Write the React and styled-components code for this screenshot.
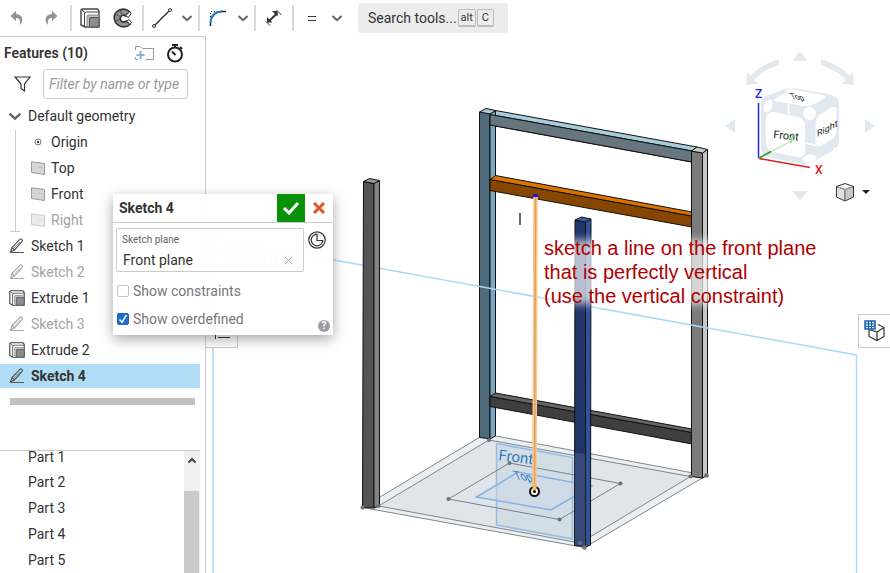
import React, { useState } from 'react';
import styled, { createGlobalStyle } from 'styled-components';

const GlobalStyle = createGlobalStyle`
  * { box-sizing: border-box; }
  body {
    margin: 0;
    background: #fff;
    color: #333;
    font: 14px/24px Roboto, "Liberation Sans", sans-serif;
    overflow: hidden;
  }
  button, input { font: inherit; color: inherit; }
  ul { list-style: none; margin: 0; padding: 0; }
  svg { display: block; }
`;

const Page = styled.div`
  position: relative;
  display: flex;
  flex-direction: column;
  height: 100vh;
`;

const Toolbar = styled.header`
  display: flex;
  flex: none;
  align-items: center;
  height: 36px;
`;

const ToolButton = styled.button`
  display: flex;
  flex: none;
  align-items: center;
  justify-content: center;
  width: ${(p) => p.$width || 32}px;
  height: 28px;
  padding: 0;
  border: 0;
  background: transparent;
`;

const Separator = styled.span`
  flex: none;
  width: 2px;
  height: 26px;
  margin: 0 2px;
  background: #dadada;
`;

const SearchButton = styled.button`
  display: flex;
  align-items: center;
  width: 150px;
  height: 30px;
  margin-left: 12px;
  padding: 0 10px;
  border: 0;
  border-radius: 3px;
  background: #ececec;
  white-space: nowrap;
`;

const Key = styled.kbd`
  height: 18px;
  min-width: 17px;
  margin-left: 1px;
  padding: 0 2px;
  border: 1px solid #bbb;
  border-bottom-width: 2px;
  border-radius: 2px;
  font: 11px/16px Roboto, sans-serif;
  text-align: center;
`;

const Workspace = styled.div`
  display: flex;
  flex: 1;
  min-height: 0;
`;

const Sidebar = styled.aside`
  display: flex;
  flex: none;
  flex-direction: column;
  width: 206px;
  border-top: 1px solid #ccc;
  border-right: 1px solid #ccc;
  padding-right: 5px;
`;

const PanelHeader = styled.div`
  display: flex;
  align-items: center;
  height: 32px;
  padding: 0 16px 0 4px;
`;

const PanelTitle = styled.h2`
  flex: 1;
  margin: 0;
  font-size: 14px;
  font-weight: 600;
`;

const IconButton = styled.button`
  display: flex;
  margin-left: 12px;
  padding: 0;
  border: 0;
  background: transparent;
`;

const FilterRow = styled.label`
  display: flex;
  align-items: center;
  gap: 12px;
  margin: 0 12px 5px 14px;
`;

const FilterInput = styled.input`
  flex: 1;
  min-width: 0;
  height: 30px;
  padding: 0 5px;
  border: 1px solid #ccc;
  border-radius: 3px;
  font-style: italic;
  &::placeholder { color: #999; opacity: 1; }
`;

const Tree = styled.ul`
  display: flex;
  flex-direction: column;
  gap: 2px;
`;

const Group = styled.ul`
  position: relative;
  display: flex;
  flex-direction: column;
  gap: 2px;
  margin-left: 15px;
  border-left: 1px solid #ccc;
  &::after {
    content: "";
    position: absolute;
    bottom: 0;
    left: -6px;
    width: 10px;
    height: 1px;
    background: #ccc;
  }
`;

const Row = styled.li`
  display: flex;
  align-items: center;
  gap: ${(p) => p.$gap || 6}px;
  height: 24px;
  padding-left: ${(p) => p.$indent || 9}px;
  background: ${(p) => (p.$active ? '#b0ddf5' : 'transparent')};
  color: ${(p) => (p.$muted ? '#a3a3a3' : '#333')};
  font-weight: ${(p) => (p.$active ? 700 : 400)};
  & > svg { flex: none; opacity: ${(p) => (p.$muted ? 0.5 : 1)}; }
`;

const RollbackBar = styled.div`
  flex: none;
  height: 7px;
  margin: 10px 5px 45px 10px;
  background: #c1c1c1;
`;

const Parts = styled.section`
  display: flex;
  flex: 1;
  min-height: 0;
  overflow: hidden;
  border-top: 1px solid #ccc;
`;

const PartList = styled.ul`
  flex: 1;
`;

const Part = styled.li`
  height: 26px;
  padding-left: 28px;
  line-height: 26px;
  &:first-child { height: 18px; line-height: 12px; }
`;

const ScrollTrack = styled.div`
  display: flex;
  flex-direction: column;
  width: 16px;
  background: #f0f0f0;
`;

const ScrollUp = styled.button`
  display: flex;
  justify-content: center;
  height: 40px;
  padding: 6px 0 0;
  border: 0;
  background: transparent;
`;

const ScrollThumb = styled.div`
  flex: 1;
  margin-right: 1px;
  background: #cbcbcb;
`;

const Canvas = styled.main`
  position: relative;
  flex: 1;
  min-width: 0;
  overflow: hidden;
`;

const Scene = styled.svg`
  width: 100%;
  height: 100%;
`;

const Note = styled.p`
  position: absolute;
  top: 200px;
  left: 338px;
  margin: 0;
  color: #b00000;
  font: 20px/24px "Liberation Sans", Arial, sans-serif;
  white-space: nowrap;
  &::before {
    content: "";
    position: absolute;
    inset: 4px -4px 4px 0;
    z-index: -1;
    background: rgba(255, 255, 255, 0.68);
    filter: blur(4px);
  }
  isolation: isolate;
`;

const ViewCube = styled.svg`
  position: absolute;
  top: 4px;
  right: 0;
`;

const ViewButton = styled.button`
  position: absolute;
  top: 146px;
  right: 20px;
  display: flex;
  align-items: center;
  gap: 7px;
  padding: 0;
  border: 0;
  background: transparent;
`;

const SideTab = styled.button`
  position: absolute;
  top: 278px;
  right: 0;
  width: 32px;
  height: 34px;
  padding: 0 0 0 5px;
  border: 1px solid #ccc;
  border-right: 0;
  background: #fff;
`;

const ListTab = styled.button`
  position: absolute;
  top: 279px;
  left: 0;
  width: 32px;
  height: 33px;
  padding: 0 0 0 8px;
  border: 1px solid #ccc;
  border-left: 0;
  background: #fff;
`;

const Dialog = styled.section`
  position: absolute;
  top: 194px;
  left: 113px;
  width: 220px;
  height: 141px;
  background: rgba(255, 255, 255, 0.95);
  box-shadow: 0 4px 12px rgba(0, 0, 0, 0.35);
`;

const DialogHeader = styled.header`
  display: flex;
  align-items: center;
  height: 29px;
  border-bottom: 1px solid #ccc;
`;

const DialogTitle = styled.h3`
  flex: 1;
  margin: 0;
  padding-left: 6px;
  font-size: 14px;
  font-weight: 700;
`;

const HeaderButton = styled.button`
  display: flex;
  align-items: center;
  justify-content: center;
  width: 28px;
  height: 28px;
  padding: 0;
  border: 0;
  background: ${(p) => (p.$accept ? '#069106' : 'transparent')};
`;

const FieldRow = styled.div`
  display: flex;
  align-items: flex-start;
  gap: 4px;
  padding: 5px 3px 0;
`;

const Field = styled.div`
  display: grid;
  grid-template-columns: 1fr 20px;
  grid-template-rows: 17px 24px;
  align-items: center;
  flex: none;
  width: 188px;
  height: 44px;
  padding: 2px 5px 0;
  border: 1px solid #ccc;
  border-radius: 2px;
`;

const FieldLabel = styled.label`
  grid-column: 1 / 3;
  color: #566470;
  font-size: 10px;
  line-height: 16px;
`;

const FieldInput = styled.input`
  min-width: 0;
  padding: 0 1px;
  border: 0;
  background: transparent;
  line-height: 22px;
`;

const ClearButton = styled.button`
  display: flex;
  justify-content: center;
  padding: 0;
  border: 0;
  background: transparent;
`;

const FinalButton = styled.button`
  display: flex;
  padding: 3px 0 0;
  border: 0;
  background: transparent;
`;

const Checks = styled.div`
  padding-top: 5px;
`;

const Check = styled.label`
  display: flex;
  align-items: center;
  gap: 4px;
  height: 28px;
  padding-left: 4px;
  color: #777;
`;

const Box = styled.input`
  appearance: none;
  width: 12px;
  height: 12px;
  margin: 0;
  border: 1px solid #c4c4c4;
  border-radius: 2px;
  background: #fff;
  &:checked {
    border-color: #1c62b8;
    background: #1f6fd0 url("data:image/svg+xml,%3Csvg xmlns='http://www.w3.org/2000/svg' viewBox='0 0 10 10'%3E%3Cpath d='M1.500 5.500l2.500 2.700L8.500 1' fill='none' stroke='white' stroke-width='1.500'/%3E%3C/svg%3E") center / 10px no-repeat;
  }
`;

const HelpButton = styled.button`
  position: absolute;
  right: 3px;
  bottom: 3px;
  width: 12px;
  height: 12px;
  padding: 0;
  border: 0;
  border-radius: 50%;
  background: #9a9ea3;
  color: #fff;
  font-size: 10px;
  font-weight: 700;
  line-height: 12px;
`;

const Chevron = ({ size = 10 }) => (
  <svg width={size} height={size} viewBox="0 0 10 10" fill="none" stroke="#666" strokeWidth="2">
    <path d="M.5 3L5 7.2 9.5 3" />
  </svg>
);

const Undo = ({ flip }) => (
  <svg width="14" height="14" viewBox="0 0 14 14" fill="#949494">
    <path
      transform={flip ? 'translate(14 0) scale(-1 1)' : undefined}
      d="M6 0L.5 5 6 10V7c3 0 4.700 1.500 3.800 7 3.600-3 4.500-10-3.800-11z"
    />
  </svg>
);

const ExtrudeIcon = ({ size = 16 }) => (
  <svg width={size} height={size} viewBox="0 0 20 20" fill="none" stroke="#444" strokeLinejoin="round">
    <path d="M1 2.500Q1 1 2.500 1H17.500L19 3v16H5L1 17z" fill="#fff" strokeWidth="1.400" />
    <path d="M4.500 18.500V6Q4.500 4 6.500 4H19M1.500 1.500l3.500 3" />
    <path d="M7 8Q7 7 8 7h9.500l1.500 1.500V19H8.500L7 17.500z" fill="#c4c4c4" stroke="#777" strokeWidth=".800" />
    <path d="M9.500 9.500H19V19H9.500z" fill="#8d8d8d" stroke="#555" />
  </svg>
);

const RevolveIcon = () => (
  <svg width="20" height="20" viewBox="0 0 20 20" stroke="#333" strokeLinejoin="round">
    <path d="M16.500 3.500C13.500 .800 9.500 .700 6.500 2 1.500 4.500 .500 9 2 13c2 5.500 9.500 8 15 3.500L13.500 13C10 15.500 6.500 13 7.500 9.500 8.500 7 11 6.500 12.500 8z" fill="#929292" strokeWidth="1.600" />
    <path d="M12.500 8l4-4.500 1.500 2-2.500 4zM13.500 13l3.500 3.500 1.500-2-2.500-3z" fill="#fff" />
    <path d="M2.500 6.500l4.500 2M7 2l2 5M2 13l5-1.500" strokeWidth=".700" />
  </svg>
);

const PencilIcon = () => (
  <svg width="16" height="16" viewBox="0 0 16 16" fill="none" stroke="#555" strokeWidth="1.200">
    <path d="M2 14.500h13M1.500 14l1.500-4.500L10.800 1.400q1-.900 2 0t.300 2L5.500 12z M3 9.500L5.500 12" />
    <path d="M5 10l6-6" strokeWidth=".600" />
  </svg>
);

const PlaneIcon = () => (
  <svg width="14" height="14" viewBox="0 0 14 14" fill="#d6d6d6" stroke="#999">
    <path d="M.500 .800l13 1.700v11L.500 11.500z" />
    <path d="M7 6l5 1" stroke="#bbb" />
  </svg>
);

const OriginIcon = () => (
  <svg width="14" height="14" viewBox="0 0 14 14" fill="none" stroke="#777">
    <circle cx="7" cy="7" r="3" />
    <circle cx="7" cy="7" r="1.200" fill="#444" stroke="none" />
  </svg>
);

const planes = [
  { name: 'Origin', icon: OriginIcon },
  { name: 'Top', icon: PlaneIcon },
  { name: 'Front', icon: PlaneIcon },
  { name: 'Right', icon: PlaneIcon, muted: true },
];

const features = [
  { name: 'Sketch 1', icon: PencilIcon },
  { name: 'Sketch 2', icon: PencilIcon, muted: true },
  { name: 'Extrude 1', icon: ExtrudeIcon },
  { name: 'Sketch 3', icon: PencilIcon, muted: true },
  { name: 'Extrude 2', icon: ExtrudeIcon },
  { name: 'Sketch 4', icon: PencilIcon, active: true },
];

const parts = ['Part 1', 'Part 2', 'Part 3', 'Part 4', 'Part 5'];

function TopBar() {
  return (
    <Toolbar>
      <ToolButton $width={34} aria-label="Undo"><Undo /></ToolButton>
      <ToolButton $width={34} aria-label="Redo"><Undo flip /></ToolButton>
      <Separator />
      <ToolButton aria-label="Extrude"><ExtrudeIcon size={20} /></ToolButton>
      <ToolButton $width={34} aria-label="Revolve"><RevolveIcon /></ToolButton>
      <Separator />
      <ToolButton aria-label="Line">
        <svg width="20" height="20" viewBox="0 0 20 20" fill="#fff" stroke="#333">
          <path d="M3 17L17 3" strokeWidth="1.500" />
          <circle cx="2" cy="18" r="1.500" />
          <circle cx="18" cy="2" r="1.500" />
        </svg>
      </ToolButton>
      <ToolButton $width={18} aria-label="Line options"><Chevron /></ToolButton>
      <Separator />
      <ToolButton aria-label="Fillet">
        <svg width="18" height="18" viewBox="0 0 18 18" fill="none" stroke="#222">
          <path d="M1.500 17v-4M12 2.500h5" strokeWidth="1.500" />
          <path d="M1.500 11V2.500H10" strokeDasharray="1 2" />
          <path d="M1.500 14Q2 3 13 2.500" stroke="#1a78c8" strokeWidth="2" />
        </svg>
      </ToolButton>
      <ToolButton $width={18} aria-label="Fillet options"><Chevron /></ToolButton>
      <Separator />
      <ToolButton aria-label="Dimension">
        <svg width="18" height="18" viewBox="0 0 18 18" fill="#333" stroke="#333">
          <path d="M3.500 12.500L12.500 4" strokeWidth="2" />
          <path d="M12.500 2v5.500L7 2zM2 8l5.500 5.500H2z" stroke="none" />
          <path d="M11.500 1l5 5M1 12.500l4 4" />
        </svg>
      </ToolButton>
      <Separator />
      <ToolButton aria-label="Equal constraint">
        <svg width="10" height="8" viewBox="0 0 10 8" stroke="#333"><path d="M1 2.500h8M1 6.500h8" /></svg>
      </ToolButton>
      <ToolButton $width={18} aria-label="Constraint options"><Chevron /></ToolButton>
      <SearchButton>
        Search tools...<Key>alt</Key><Key>C</Key>
      </SearchButton>
    </Toolbar>
  );
}

function FeaturePanel() {
  return (
    <Sidebar>
      <PanelHeader>
        <PanelTitle>Features (10)</PanelTitle>
        <IconButton aria-label="New folder">
          <svg width="19" height="16" viewBox="0 0 19 16" fill="none" stroke="#999">
            <path d="M.500 5V1.500h5l2 2h11v11h-8M.500 12v2.500H3" />
            <path d="M5.500 6v8M1.500 10h8" stroke="#7db4dc" strokeWidth="2" />
          </svg>
        </IconButton>
        <IconButton aria-label="Regeneration times">
          <svg width="18" height="20" viewBox="0 0 18 20" fill="none" stroke="#222" strokeWidth="2">
            <circle cx="9" cy="11.500" r="7" />
            <path d="M6 2h6M9 2v3M14 4l2 2M6 8.500l3.500 3.500" />
          </svg>
        </IconButton>
      </PanelHeader>
      <FilterRow>
        <svg width="17" height="16" viewBox="0 0 17 16" fill="none" stroke="#333" strokeWidth="1.200">
          <path d="M1 1h15l-5.500 7v7l-3.500-2.500V8z" />
        </svg>
        <FilterInput placeholder="Filter by name or type" aria-label="Filter features" />
      </FilterRow>
      <Tree>
        <Row $gap={7}><Chevron size={12} /><span>Default geometry</span></Row>
        <li>
          <Group>
            {planes.map(({ name, icon: Icon, muted }) => (
              <Row key={name} $indent={15} $muted={muted}><Icon />{name}</Row>
            ))}
          </Group>
        </li>
        {features.map(({ name, icon: Icon, muted, active }) => (
          <Row key={name} $muted={muted} $active={active}><Icon />{name}</Row>
        ))}
      </Tree>
      <RollbackBar />
      <Parts>
        <PartList>
          {parts.map((name) => <Part key={name}>{name}</Part>)}
        </PartList>
        <ScrollTrack>
          <ScrollUp aria-label="Scroll up">
            <svg width="8" height="7" viewBox="0 0 8 7" fill="none" stroke="#444" strokeWidth="2"><path d="M.500 5.500L4 2l3.500 3.500" /></svg>
          </ScrollUp>
          <ScrollThumb />
        </ScrollTrack>
      </Parts>
    </Sidebar>
  );
}

function Model() {
  return (
    <Scene viewBox="206 36 684 537" preserveAspectRatio="xMinYMin slice" role="img" aria-label="Chair frame model">
      <path d="M362.500 507.500L485 434l221.500 41.500-122 72z" fill="#ebeff1" stroke="#7d868e" />
      <path d="M378.500 506L489 440l201.500 36.500L580 543z" fill="#e0e5e9" stroke="#7d868e" />
      <path d="M496.500 443.500l76 14V539l-76-14z" fill="#c9d7e4" fillOpacity=".6" stroke="#95bbe0" strokeWidth="1.500" />
      <path d="M476.500 497L518 472l74 14-41 24z" fill="#cbd8e6" fillOpacity=".5" stroke="#86b2e0" strokeWidth="1.500" />
      <path d="M509.500 463l111 20.500-61 36-111-20.500z" fill="none" stroke="#77828b" />
      <g fill="#66747e">
        <circle cx="509.500" cy="463" r="2" /><circle cx="448.500" cy="499" r="2" />
        <circle cx="620.500" cy="483.500" r="2" /><circle cx="559.500" cy="519.500" r="2" />
      </g>
      <g fill="#3478bd" fontFamily="Roboto, sans-serif">
        <text transform="translate(498 460) rotate(7)" fontSize="15">Front</text>
        <text transform="translate(516 479) rotate(10) skewX(35)" fontSize="11">Top</text>
      </g>
      <g stroke="#111" strokeWidth="1" strokeLinejoin="round">
        <path d="M490 114.500l202 36.500v11l-202-37z" fill="#66757e" />
        <path d="M490 114.500l5.500-4L697 147l-5 4z" fill="#a9cbde" />
        <path d="M479.500 112H490v325.500l-2 1-8.500-1z" fill="#4f6b7b" />
        <path d="M490 114l5.500-3.500V436l-5.500 3z" fill="#7ba7c4" />
        <path d="M479.500 112l6.500-3.500 9.500 2-5.500 3.500z" fill="#a9cbde" />
        <path d="M490 114.500l202 36.500v11l-202-37z" fill="#66757e" />
        <path d="M490 179.500L692 216v11l-202-36.500z" fill="#874600" />
        <path d="M490 179.500l5.500-4L692 212v4z" fill="#da7400" />
        <path d="M490 396.500l202 36V444l-202-37.500z" fill="#3f3f3f" />
        <path d="M490 396.500l5.500-3.500L692 429v3.500z" fill="#676767" />
        <path d="M691.500 151l11 2v325l-11-1.500z" fill="#7b7b7b" />
        <path d="M702.500 153l5-3.500V475l-5 3z" fill="#c6c6c6" />
        <path d="M691.500 151l5.500-4 10.500 2.500-5 3.500z" fill="#ccc" />
      </g>
      <path d="M213 573V238l643.500 117v218" fill="none" stroke="#a8dbf7" strokeWidth="1.500" />
      <text transform="translate(220 257) rotate(9)" fontFamily="Roboto, sans-serif" fontSize="15" fontWeight="700" fill="#a8dbf7">Sketch 4</text>
      <g stroke="#111" strokeLinejoin="round">
        <path d="M363.500 181.500l10.500 2V508l-11.500-.500z" fill="#545454" />
        <path d="M374 183.500l5.500-3V506l-5.500 2z" fill="#858585" />
        <path d="M363.500 181.500l6-3 10 2-5.500 3z" fill="#9c9c9c" />
        <path d="M575 220l10.500 2v324.500l-11-1z" fill="#20356a" />
        <path d="M585.500 222l5.500-3-.500 326-5 2z" fill="#32539b" />
        <path d="M575 220l6.500-3 9.500 2-5.500 3z" fill="#3a5cab" />
      </g>
      <path d="M574.500 453l11 1v92l-11-1z" fill="#cdd8e0" fillOpacity=".13" />
      <g fill="#66747e">
        <circle cx="362.500" cy="507.500" r="2" /><circle cx="378.500" cy="506" r="2" />
        <circle cx="489" cy="440" r="2" /><circle cx="690.500" cy="476.500" r="2" />
        <circle cx="706.500" cy="475.500" r="2.300" /><circle cx="580" cy="543" r="2" />
        <circle cx="584.500" cy="547.500" r="2.300" />
      </g>
      <path d="M535.500 196L534.500 490" stroke="#fbc78a" strokeWidth="4.500" />
      <path d="M535.500 196L534.500 490" stroke="#dda264" strokeWidth="1.500" />
      <path d="M532.500 197a3 3 0 016 0z" fill="#1010e8" />
      <circle cx="534.500" cy="491.500" r="4.500" fill="#fff" stroke="#111" strokeWidth="2" />
      <path d="M534.500 484v6" stroke="#fbb869" strokeWidth="4" />
      <circle cx="534.500" cy="491.500" r="1.600" fill="#111" />
      <path d="M520 213v12" stroke="#444" strokeWidth="1.600" />
    </Scene>
  );
}

function Orientation() {
  return (
    <ViewCube width="170" height="165" viewBox="720 40 170 165" role="img" aria-label="View cube">
      <g fill="#e1e8ef">
        <path d="M792.500 61l7.500-10 7.500 10zM792.500 191h15l-7.500 9.500zM735 119v14l-10-7zM865 119v14l10-7z" />
        <path d="M747 72l-1 13 12-1zM853 72l1 13-12-1z" />
        <path d="M761 102q0-4 5-6l18-7q4-1.500 9-1l35 6q11 3 11 9v39q-1 5-7 9l-17 10q-7 4-13 3l-34-7q-7-3-7-9z" />
      </g>
      <path d="M779 62q-17 5-27 16M821 62q17 5 27 16" fill="none" stroke="#e1e8ef" strokeWidth="5.500" />
      <g fill="#fff">
        <path d="M766 120q0-9 8-8l24 5q7 1.500 7 9v24q0 8-8 7l-23-5q-8-2-8-9z" />
        <path d="M774 101q-2-1 3-3.500l12-6.500q3-1.500 7-.800l25 4.300q7 1.500 3 4l-11 6q-4 2-9 1.500l-24-4q-4-.500-6-1z" />
        <path d="M815.500 124q0-6 5-9.500l11-7q5-2.500 5 3v20q0 6-5 9l-10 6q-6 3-6-3z" />
        <circle cx="809.500" cy="113.500" r="6.500" />
        <ellipse cx="768" cy="106" rx="4" ry="7" transform="rotate(25 768 106)" />
        <ellipse cx="809.500" cy="158.500" rx="7" ry="4" transform="rotate(-8 809.500 158.500)" />
      </g>
      <path d="M788.500 104v10M805 143l11 2.500M785 91l8-3M833 148l6 3" stroke="#fff" strokeWidth="1.500" />
      <g fontFamily="Roboto, sans-serif" fill="#222">
        <text transform="translate(773 138) rotate(6)" fontSize="11">Front</text>
        <text transform="translate(792 99) rotate(8) skewX(35)" fontSize="8">Top</text>
        <text transform="translate(817 137) skewY(-28)" fontSize="9">Right</text>
      </g>
      <path d="M758.500 103v55" stroke="#2626e0" strokeWidth="1.500" />
      <path d="M759 158.500l51 9" stroke="#e02020" strokeWidth="1.500" />
      <path d="M759 158l36-19" stroke="#9bdc9b" />
      <path d="M759 158l12-6.500" stroke="#22a022" strokeWidth="1.500" />
      <g fontFamily="Roboto, sans-serif" fontSize="12" fontWeight="500">
        <text x="755" y="98" fill="#2626e0">Z</text>
        <text x="815" y="174" fill="#e02020">X</text>
        <text x="788" y="143" fill="#8ed58e" fontSize="10">Y</text>
      </g>
    </ViewCube>
  );
}

function SketchDialog() {
  const [plane, setPlane] = useState('Front plane');
  return (
    <Dialog aria-label="Sketch 4">
      <DialogHeader>
        <DialogTitle>Sketch 4</DialogTitle>
        <HeaderButton $accept aria-label="Accept">
          <svg width="18" height="14" viewBox="0 0 18 14" fill="none" stroke="#fff" strokeWidth="3"><path d="M2 7l5 5 9-10" /></svg>
        </HeaderButton>
        <HeaderButton aria-label="Cancel">
          <svg width="14" height="14" viewBox="0 0 14 14" stroke="#e0532b" strokeWidth="3"><path d="M2 2l10 10M12 2L2 12" /></svg>
        </HeaderButton>
      </DialogHeader>
      <FieldRow>
        <Field>
          <FieldLabel htmlFor="sketch-plane">Sketch plane</FieldLabel>
          <FieldInput id="sketch-plane" value={plane} onChange={(e) => setPlane(e.target.value)} />
          <ClearButton aria-label="Clear plane" onClick={() => setPlane('')}>
            <svg width="9" height="9" viewBox="0 0 9 9" stroke="#aaa"><path d="M1 1l7 7M8 1L1 8" /></svg>
          </ClearButton>
        </Field>
        <FinalButton aria-label="Show final">
          <svg width="18" height="18" viewBox="0 0 18 18" fill="none" stroke="#333">
            <circle cx="9" cy="9" r="8.200" strokeWidth="1.200" />
            <path d="M9 3.200A5.800 5.800 0 1014.800 9.500H9z" strokeWidth="1.200" />
          </svg>
        </FinalButton>
      </FieldRow>
      <Checks>
        <Check><Box type="checkbox" />Show constraints</Check>
        <Check><Box type="checkbox" defaultChecked />Show overdefined</Check>
      </Checks>
      <HelpButton aria-label="Help">?</HelpButton>
    </Dialog>
  );
}

export default function App() {
  return (
    <Page>
      <GlobalStyle />
      <TopBar />
      <Workspace>
        <FeaturePanel />
        <Canvas>
          <Model />
          <Note>
            sketch a line on the front plane<br />
            that is perfectly vertical<br />
            (use the vertical constraint)
          </Note>
          <Orientation />
          <ViewButton aria-label="View options">
            <svg width="20" height="20" viewBox="0 0 20 20" stroke="#333" strokeLinejoin="round">
              <path d="M1.500 4.500L10 7.500V19l-8.500-4z" fill="#e0e0e0" />
              <path d="M18.500 4.500L10 7.500V19l8.500-4z" fill="#c8c8c8" />
              <path d="M1.500 4.500L10 1.500l8.500 3-8.500 3z" fill="#f4f4f4" />
              <path d="M2.500 5L10 7.500 17.500 5M10 7.500v11" fill="none" stroke="#b5b5b5" />
            </svg>
            <svg width="8" height="4" viewBox="0 0 8 4" fill="#222"><path d="M0 0h8L4 4z" /></svg>
          </ViewButton>
          <SideTab aria-label="Configurations">
            <svg width="22" height="22" viewBox="0 0 22 22" fill="none" stroke="#333">
              <path d="M5 9.500v7l8 4 7-4v-9l-6-3M5 9.500l8 2.500 7-4.500M13 12v8.500" strokeWidth="1.200" />
              <path d="M1 1h10v8H1z" fill="#cfe3f7" stroke="#1c5fb0" strokeWidth="1.500" />
              <path d="M1 4h10M1 6.500h10M4.500 1v8M7.500 1v8" stroke="#1c5fb0" />
            </svg>
          </SideTab>
          <ListTab aria-label="Feature list">
            <svg width="16" height="14" viewBox="0 0 16 14" stroke="#333"><path d="M4 1.500h12M4 6.500h12M4 12.500h12M1.500 9v5M1.500 0v5" /></svg>
          </ListTab>
        </Canvas>
      </Workspace>
      <SketchDialog />
    </Page>
  );
}
